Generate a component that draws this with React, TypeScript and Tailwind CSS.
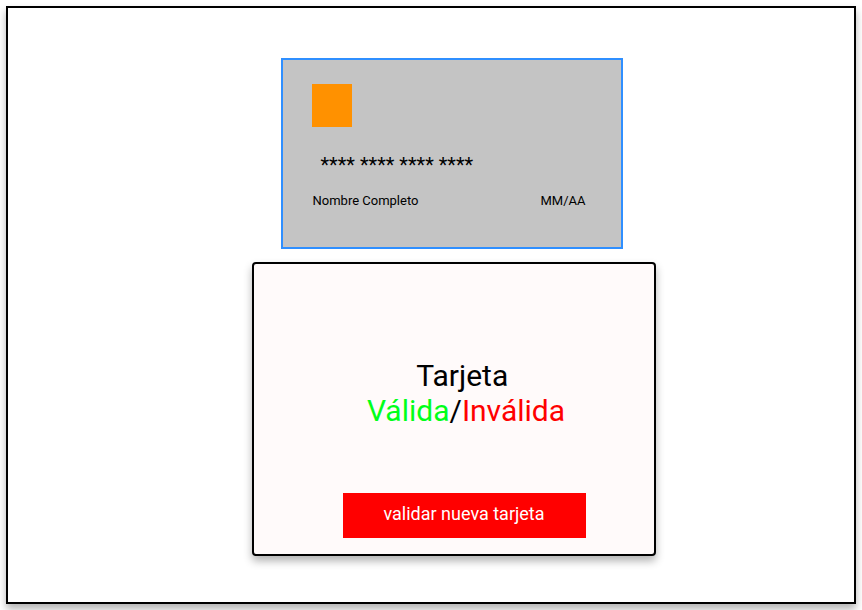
export default function App() {
  return (
    <div className="h-screen overflow-hidden bg-white p-[6px] font-['Roboto',sans-serif] text-black">
      <main className="flex h-full flex-col items-center border-2 border-black bg-white pt-[50px] pl-[46px] shadow-[0_5px_8px_rgba(0,0,0,0.3)]">
        <section className="mr-[5px] h-[191px] w-[342px] shrink-0 border-2 border-[#2f8fff] bg-[#c4c4c4] px-[30px] pt-[24px]">
          <div className="-ml-px h-[43px] w-[40px] bg-[#ff9100]" />
          <p className="mt-[25px] pl-[8px] text-[20px] leading-[26px]">**** **** **** ****</p>
          <div className="mt-[15px] flex justify-between pr-[5px] text-[13px] leading-[16px]">
            <span>Nombre Completo</span>
            <span>MM/AA</span>
          </div>
        </section>
        <section className="mt-[13px] flex h-[294px] w-[404px] shrink-0 flex-col items-center rounded-[4px] border-2 border-black bg-[#fffafa] pt-[94px] pl-[20px] shadow-[0_5px_8px_rgba(0,0,0,0.3)]">
          <h1 className="pl-[4px] text-center text-[30px] leading-[35px]">
            Tarjeta{"\u00a0"}
            <br />
            <span className="text-[#00ff19]">Válida</span>/<span className="text-[#ff0000]">Inválida</span>
          </h1>
          <button type="button" className="mt-[65px] h-[45px] w-[243px] bg-[#ff0000] pb-[4px] text-[18px] leading-[21px] text-white">
            validar nueva tarjeta
          </button>
        </section>
      </main>
    </div>
  );
}
